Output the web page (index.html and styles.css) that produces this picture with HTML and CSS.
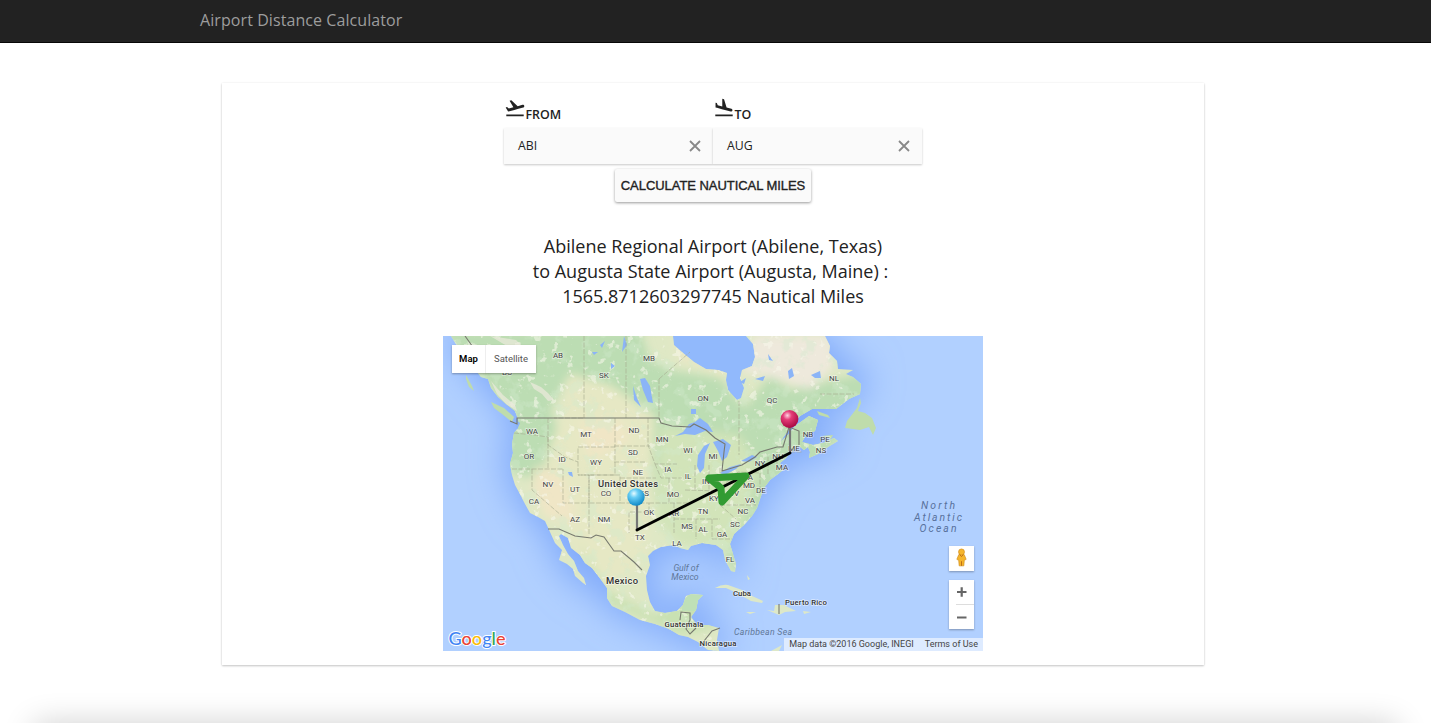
FILE: index.html
```html
<!DOCTYPE html>
<html lang="en">
<head>
<meta charset="utf-8">
<title>Airport Distance Calculator</title>
<link rel="stylesheet" href="styles.css">
</head>
<body>
<header class="navbar"><span class="brand">Airport Distance Calculator</span></header>
<main class="panel">
  <form class="search">
    <div class="fields">
      <div class="field">
        <label class="field-label"><svg class="plane" viewBox="0 0 24 24"><path d="M2.5 19h19v2h-19zm19.57-9.36c-.21-.8-1.04-1.28-1.84-1.06L14.92 10l-6.9-6.43-1.93.51 4.14 7.17-4.97 1.33-1.97-1.54-1.45.39 1.82 3.16.77 1.33 1.6-.43 5.31-1.42 4.35-1.16L21 11.49c.81-.23 1.28-1.05 1.07-1.85z"/></svg><span class="label-text">FROM</span></label>
        <div class="input"><span class="code">ABI</span><svg class="clear" viewBox="0 0 12 12"><path d="M1 1l10 10M11 1L1 11"/></svg></div>
      </div>
      <div class="field">
        <label class="field-label"><svg class="plane" viewBox="0 0 24 24"><path d="M2.5 19h19v2h-19zm7.18-5.73l4.35 1.16 5.31 1.42c.8.21 1.62-.26 1.84-1.06.21-.8-.26-1.62-1.06-1.84l-5.31-1.42-2.76-9.02L10.12 2v8.28L5.15 8.95l-.93-2.32-1.45-.39v5.17l1.6.43 5.31 1.43z"/></svg><span class="label-text">TO</span></label>
        <div class="input"><span class="code">AUG</span><svg class="clear" viewBox="0 0 12 12"><path d="M1 1l10 10M11 1L1 11"/></svg></div>
      </div>
    </div>
    <button type="button" class="calculate">CALCULATE NAUTICAL MILES</button>
  </form>
  <div class="result">
    <div class="l1">Abilene Regional Airport (Abilene, Texas)</div>
    <div class="l2">to Augusta State Airport (Augusta, Maine) :</div>
    <div class="l3">1565.8712603297745 Nautical Miles</div>
  </div>
  <section class="map">
    <svg class="map-canvas" viewBox="443 336 540 315">
      <defs>
        <path id="mainland" d="M451 336L456 344 467 353 466 361 474 368 481 377 488 379 491 388 498 397 506 404 515 411 518 419 518 428 514 433 512 444 513 453 510 464 512 475 515 485 521 496 525 504 530 513 538 517 545 521 550 532 555 543 562 550 559 560 567 564 573 569 575 576 583 583 586 585 584 578 578 571 574 561 568 554 563 545 559 536 561 534 568 538 571 548 580 555 585 563 592 568 599 577 607 588 607 598 612 606 625 612 640 620 655 624 669 629 679 635 688 637 698 642 708 650 719 651 717 640 719 628 708 625 697 625 691 617 696 610 698 600 703 595 692 594 686 596 683 605 677 611 665 613 655 611 650 602 647 590 646 576 650 565 648 556 653 551 661 547 674 545 680 548 688 550 691 546 702 543 716 545 723 550 725 560 731 571 735 572 736 564 733 554 730 544 734 534 744 525 752 516 757 508 760 499 764 488 770 480 778 474 783 470 780 463 786 458 790 453 799 446 804 450 808 447 810 452 809 458 818 454 828 447 838 441 834 438 823 443 813 445 802 442 806 435 815 431 818 420 809 416 795 426 788 435 780 442 790 428 800 416 812 409 836 409 849 399 860 394 861 384 853 377 846 374 853 370 838 369 837 361 829 353 830 346 825 336 746 336 753 344 755 357 752 366 742 370 740 378 744 388 741 398 737 400 728 390 726 380 727 373 718 370 706 369 694 362 683 353 674 345 673 336Z"/>
        <clipPath id="land-clip"><use href="#mainland"/></clipPath>
        <filter id="soft" x="-20%" y="-20%" width="140%" height="140%"><feGaussianBlur stdDeviation="5"/></filter>
        <filter id="coast" x="-30%" y="-30%" width="160%" height="160%"><feGaussianBlur stdDeviation="17"/></filter>
        <filter id="woods" x="0" y="0" width="100%" height="100%"><feTurbulence type="fractalNoise" baseFrequency=".065" numOctaves="4" seed="8"/><feColorMatrix values="0 0 0 0 .65  0 0 0 0 .83  0 0 0 0 .62  7 0 0 0 -3.8"/></filter>
        <filter id="clearings" x="0" y="0" width="100%" height="100%"><feTurbulence type="fractalNoise" baseFrequency=".12" numOctaves="3" seed="21"/><feColorMatrix values="0 0 0 0 .93  0 0 0 0 .93  0 0 0 0 .83  0 12 0 0 -7.7"/></filter>
        <radialGradient id="blue-ball" cx=".38" cy=".3" r=".7"><stop offset="0" stop-color="#e7fbff"/><stop offset=".35" stop-color="#67cdf5"/><stop offset="1" stop-color="#128bc8"/></radialGradient>
        <radialGradient id="red-ball" cx=".38" cy=".3" r=".7"><stop offset="0" stop-color="#ffd3e2"/><stop offset=".35" stop-color="#e43c77"/><stop offset="1" stop-color="#aa0b43"/></radialGradient>
      </defs>
      <rect class="water" x="443" y="336" width="540" height="315"/>
      <use href="#mainland" class="shelf" filter="url(#coast)"/>
      <path class="bay" d="M673 336V345L683 353 694 362 706 369 718 370 727 373 726 380 728 390 737 400 741 398 744 388 740 378 742 370 752 366 755 357 753 344 746 336Z"/>
      <use href="#mainland" class="land"/>
      <g clip-path="url(#land-clip)">
        <g filter="url(#soft)">
          <path fill="#bcddb3" d="M440 330H640L650 360 670 370 720 378 745 408 770 375 790 390 870 372 870 410 810 470 750 530 735 580 720 540 680 540 655 500 650 420 610 395 570 373 550 410 560 435 538 480 505 470 500 400Z"/>
          <path fill="#d2e4b9" d="M660 425L740 435 760 470 735 550 680 545 655 520Z"/>
          <path fill="#eee9dc" d="M755 335H830L835 365 810 390 780 380 760 375 740 371Z"/>
          <path fill="#ece7c5" d="M673 335L680 360 730 377 728 365Z"/>
          <path fill="#e6e8c4" d="M570 374L610 385 655 415 650 500 645 560 600 600 560 520 545 460 560 420Z"/>
          <path fill="#f0e6c6" d="M535 466L562 475 575 510 570 523 545 517 533 490ZM580 421L620 420 630 440 590 460Z"/>
          <path fill="#c9e1b2" d="M580 540L605 590 655 615 685 596 710 594 715 628 680 635 600 600Z"/>
        </g>
        <rect x="443" y="336" width="540" height="315" filter="url(#woods)" opacity=".38"/>
        <rect x="443" y="336" width="540" height="315" filter="url(#clearings)" opacity=".55"/>
        <path fill="#bfe0b7" d="M683 600L690 594 703 595 697 611 682 611Z"/>
        <path fill="#eceadd" opacity=".7" d="M490 336L516 340 523 347 507 346ZM530 382L541 387 548 393 554 400 548 401 542 394 534 389ZM491 381L503 395 515 405 517 411 507 405 497 394ZM505 417L516 412 513 419Z"/>
      </g>
      <g fill="#bfdcab"><path d="M466 375L472 386 474 391 469 387 466 379ZM491 402L504 408 514 417 512 422 502 414 494 408Z"/><path d="M860 398L857 408 847 421 845 428 853 429 860 430 869 427 873 435 876 428 872 418 865 413 858 411 861 403ZM817 411L828 415 830 418 819 415ZM822 436L833 435 831 439Z"/><path fill="#dde8c8" d="M715 588Q722 584 728 585L742 590 750 595 763 601 762 603 751 601 737 593 726 588ZM767 610L774 611 775 605 784 605 796 611 785 612 779 615ZM746 612L756 612 750 614ZM803 611L811 612 804 614ZM771 651L782 645 779 651ZM747 575L750 579 748 580Z"/></g>
      <g class="lake"><path d="M675 436L683 432 689 424 695 422 700 418 708 424 713 432 705 431 695 435 685 434Z"/><path d="M697 466L698 455 704 446 710 443 705 454 704 468 700 473Z"/><path d="M713 442L723 439 731 445 727 457 722 461 718 451ZM720 473L730 467 741 464 736 469 725 475ZM741 461L752 455 757 457 749 462Z"/><path d="M640 379L645 378 650 386 653 403 648 402 643 390ZM633 386L637 398 641 407 634 400ZM624 336L627 345 622 352ZM691 409L696 409 696 414 691 414ZM568 472L572 472 573 477 569 475ZM600 345L605 341 602 348ZM592 352L598 352 594 355ZM611 363L615 366 611 369ZM740 382L746 378 744 384ZM788 371L792 368 794 376 789 379ZM811 375L820 371 821 378 815 378ZM768 354L773 361 769 360ZM755 379L765 376 763 381ZM514 418L520 423 517 430Z"/></g>
      <g class="state"><path d="M584 336V418M626 336V418M659 379V418M659 379L690 352M739 401V455M583 418L554 418M548 418V445L565 457 578 462M514 433L534 435 548 437M548 437V469M512 469H563M563 469V503H589V475H578M578 447H615V475H578ZM532 469V490L562 516M589 503V535M589 475H620V503H589ZM614 462H646M614 446H650M615 418V447M620 478H656M620 503H649V512H629V533M649 503H669M648 418V445L655 464H677M655 464L661 478H682M669 478V503H690M674 503V533M674 519H720M685 490L719 491M695 465V490M709 465V490M720 468V490M696 519V539M712 519V539M720 505H756M712 539H732M720 505L736 519M721 487L738 472 760 473M760 473V490M768 474V457M777 466V452M790 452H802M820 394H854"/></g>
      <path class="border" d="M465 336L475 350 487 361 491 370M510 421L517 424 517 418H659L661 423 672 426 690 427 694 424 706 430 715 438L725 444 724 452 722 471 742 465 755 457 760 452 777 447 783 447 789 427 799 431 799 445M548 529L559 529 575 536 591 538 596 535 604 537 614 551 621 551 634 562 642 570M680 620L681 612 690 613 690 620 686 629 690 634 696 628M704 641L712 631 720 628M779 604V614"/>
      <g class="labels">
        <text x="558" y="358">AB</text><text x="507" y="375">BC</text><text x="604" y="378">SK</text><text x="649" y="361">MB</text><text x="703" y="401">ON</text><text x="772" y="403">QC</text><text x="834" y="381">NL</text><text x="532" y="434">WA</text><text x="586" y="437">MT</text><text x="634" y="433">ND</text><text x="662" y="442">MN</text><text x="808" y="437">NB</text><text x="825" y="442">PE</text><text x="821" y="453">NS</text><text x="794" y="451">ME</text><text x="778" y="459">NH</text><text x="529" y="459">OR</text><text x="562" y="462">ID</text><text x="596" y="465">WY</text><text x="633" y="455">SD</text><text x="688" y="453">WI</text><text x="713" y="459">MI</text><text x="760" y="466">NY</text><text x="782" y="470">MA</text><text x="638" y="475">NE</text><text x="668" y="472">IA</text><text x="688" y="479">IL</text><text x="706" y="484">IN</text><text x="748" y="480">PA</text><text x="749" y="488">MD</text><text x="761" y="493">DE</text><text x="548" y="487">NV</text><text x="575" y="492">UT</text><text x="606" y="496">CO</text><text x="644" y="496">KS</text><text x="673" y="497">MO</text><text x="714" y="501">KY</text><text x="733" y="496">WV</text><text x="750" y="503">VA</text><text x="534" y="504">CA</text><text x="575" y="522">AZ</text><text x="604" y="522">NM</text><text x="649" y="515">OK</text><text x="674" y="516">AR</text><text x="703" y="514">TN</text><text x="743" y="514">NC</text><text x="735" y="527">SC</text><text x="687" y="529">MS</text><text x="703" y="532">AL</text><text x="722" y="537">GA</text><text x="640" y="540">TX</text><text x="677" y="546">LA</text><text x="730" y="562">FL</text>
        <g class="country"><text x="628" y="487" textLength="60">United States</text><text x="622" y="584" textLength="32">Mexico</text></g>
        <g class="island"><text x="742" y="596">Cuba</text><text x="806" y="605" textLength="42">Puerto Rico</text><text x="684" y="627" textLength="39">Guatemala</text><text x="718" y="646" textLength="37">Nicaragua</text></g>
        <g class="sea"><text x="686" y="571">Gulf of</text><text x="685" y="580">Mexico</text><text x="763" y="635" textLength="58">Caribbean Sea</text></g>
        <g class="ocean"><text x="938" y="509" textLength="34">North</text><text x="938" y="520.5" textLength="48">Atlantic</text><text x="938" y="532" textLength="37">Ocean</text></g>
      </g>
      <path class="stem" d="M637 500V530M790 424V452"/>
      <path class="route" d="M637 530L790 453"/>
      <path class="arrow" d="M709 478L746 476 722 502 721 488Z"/>
      <circle cx="636" cy="497" r="8.7" fill="url(#blue-ball)"/><circle cx="789.5" cy="419" r="8.9" fill="url(#red-ball)"/>
      <text class="google" x="448.5" y="645" textLength="57" lengthAdjust="spacingAndGlyphs"><tspan fill="#4285f4">G</tspan><tspan fill="#ea4335">o</tspan><tspan fill="#fbbc05">o</tspan><tspan fill="#4285f4">g</tspan><tspan fill="#34a853">l</tspan><tspan fill="#ea4335">e</tspan></text>
    </svg>
    <div class="map-type"><span class="selected">Map</span><span class="satellite">Satellite</span></div>
    <div class="controls">
      <div class="person"><svg viewBox="0 0 14 20"><g fill="#f5b52c" stroke="#d18b18" stroke-width=".7"><path d="M4 7Q7 5 10 7L12 12 10 13 9.5 19H4.5L4 13 2 12Z"/><circle cx="7" cy="4" r="3.2"/></g><path d="M5 7L7 9 9 7M7 14V19" fill="none" stroke="#b96a16"/></svg></div>
      <div class="zoom"><svg viewBox="0 0 25 49"><path class="sign" d="M8 12H17.5M12.7 7.3V16.8M8 37.5H17.5"/><path d="M7 24.5H25" stroke="#ddd"/></svg></div>
    </div>
    <div class="credits"><span class="data">Map data ©2016 Google, INEGI</span><span>Terms of Use</span></div>
  </section>
</main>
<div class="bottom-shade"></div>
</body>
</html>
```
FILE: styles.css
```css
* { box-sizing: border-box; }
body { margin: 0; height: 723px; overflow: hidden; background: #fff; color: #222; font-family: "Open Sans", sans-serif; }
.navbar { height: 43px; padding: 9px 0 0 200px; background: #222; border-bottom: 1px solid #080808; }
.brand { display: block; color: #9d9d9d; font-size: 16px; line-height: 22px; letter-spacing: .08px; }
.panel { width: 982px; height: 582px; margin: 40px 0 0 222px; padding-top: 14px; display: flex; flex-direction: column; align-items: center; background: #fff; box-shadow: 0 1px 2px rgba(0,0,0,.22), 0 0 2px rgba(0,0,0,.06); }
.search { display: flex; flex-direction: column; align-items: center; }
.fields { display: flex; }
.field { width: 209px; }
.field-label { display: flex; height: 31px; }
.plane { width: 22px; height: 22px; fill: #222; }
.label-text { margin-left: -.6px; padding-top: 9px; font-size: 12.4px; font-weight: 600; line-height: 18px; }
.input { display: flex; justify-content: space-between; align-items: center; height: 36px; padding: 0 12px 0 14px; background: #fafafa; box-shadow: 0 1px 2px rgba(0,0,0,.22); }
.code { font-size: 12.3px; line-height: 18px; }
.clear { width: 12px; height: 12px; fill: none; stroke: #888; stroke-width: 1.8; }
.calculate { width: 196px; height: 33px; margin: 5px 0 0; padding: 0; border: 0; border-radius: 2px; background: #fafafa; box-shadow: 0 1px 3px rgba(0,0,0,.4); color: #222; font: 13px "Liberation Sans", sans-serif; letter-spacing: -.05px; -webkit-text-stroke: .35px #222; white-space: nowrap; }
.result { margin-top: 32px; font-size: 18px; line-height: 25px; text-align: center; white-space: nowrap; }
.l2 { margin-right: 5px; }
.map { position: relative; width: 540px; height: 315px; margin-top: 27px; overflow: hidden; font-family: Roboto, sans-serif; }
.map-canvas { display: block; width: 540px; height: 315px; }
.water { fill: #b1d0ff; }
.shelf { fill: #82abfa; stroke: #82abfa; stroke-width: 12; }
.bay { fill: #91b9fc; }
.land { fill: #dfe8c5; }
.lake { fill: #8bb4f7; }
.state { fill: none; stroke: #a5a98f; stroke-width: .6; stroke-dasharray: 5 1.5; }
.border { fill: none; stroke: #77796f; stroke-width: 1.1; }
.labels { fill: #444; text-anchor: middle; font-size: 8px; font-weight: 400; stroke: rgba(255,255,255,.55); stroke-width: 1.4px; paint-order: stroke; }
.country { font-size: 9.4px; font-weight: 500; fill: #333; }
.island { font-size: 7.8px; font-weight: 500; fill: #333; }
.sea { font-size: 8.7px; font-style: italic; fill: #607798; stroke: none; }
.ocean { font-size: 10.4px; font-style: italic; fill: #58719c; stroke: none; }
.stem { fill: none; stroke: #777; stroke-width: 2.2; }
.route { fill: none; stroke: #000; stroke-width: 2.8; stroke-linecap: round; }
.arrow { fill: none; stroke: #329b32; stroke-width: 7; stroke-linejoin: round; }
.google { font: 500 18px Lato, sans-serif; stroke: #fff; stroke-width: 2px; paint-order: stroke; }
.map-type { position: absolute; left: 9px; top: 9px; width: 84px; height: 28px; display: flex; background: #fff; box-shadow: 0 1px 2px rgba(0,0,0,.3); font-size: 9.5px; line-height: 28px; }
.selected { width: 34px; border-right: 1px solid #eee; text-align: center; color: #000; font-weight: 600; }
.satellite { flex: 1; text-align: center; color: #565656; }
.controls { position: absolute; left: 506px; top: 210px; width: 25px; display: flex; flex-direction: column; gap: 9px; }
.person, .zoom { background: #fff; box-shadow: 0 1px 2px rgba(0,0,0,.3); }
.person { display: flex; justify-content: center; align-items: flex-start; height: 25px; padding-top: 2px; }
.person svg { width: 13px; height: 19px; }
.zoom { height: 49px; }
.zoom svg { display: block; }
.sign { stroke: #666; stroke-width: 2.2; }
.credits { position: absolute; right: 0; bottom: 0; height: 13px; display: flex; gap: 11px; padding: 0 5px; background: rgba(240,245,255,.72); color: #444; font-size: 9px; line-height: 13px; white-space: nowrap; }
.bottom-shade { position: absolute; left: 40px; right: 40px; top: 730px; height: 20px; box-shadow: 0 0 32px 6px rgba(0,0,0,.2); }
```
